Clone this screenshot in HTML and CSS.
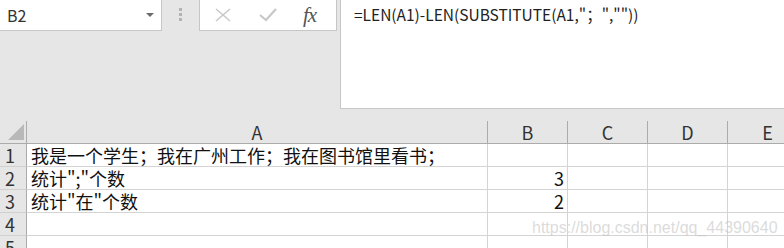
FILE: index.html
```html
<!DOCTYPE html>
<html lang="zh-CN">
<head>
	<meta charset="UTF-8">
	<title>Excel</title>
	<link rel="stylesheet" href="styles.css">
</head>
<body>
	<!-- 编辑栏 -->
	<div class="bar">
		<div class="namebox">
			<span class="name">B2</span>
			<span class="arrow"></span>
		</div>
		<div class="grip">
			<i></i><i></i><i></i>
		</div>
		<div class="fxbox">
			<svg class="ico" width="18" height="16" viewBox="0 0 18 16">
				<path d="M2 2 L16 14 M16 2 L2 14" stroke="#c8c8c8" stroke-width="1.5" fill="none"/>
			</svg>
			<svg class="ico" width="18" height="16" viewBox="0 0 18 16">
				<path d="M1 8 L7 13 L17 2" stroke="#c8c8c8" stroke-width="2.2" fill="none"/>
			</svg>
			<span class="fx">fx</span>
		</div>
		<div class="formula">=LEN(A1)-LEN(SUBSTITUTE(A1,"；","")) </div>
	</div>

	<!-- 表格 -->
	<div class="sheet">
		<div class="grid">
			<div class="hd corner">
				<svg width="16" height="16" viewBox="0 0 16 16"><polygon points="16,0 16,16 0,16" fill="#b8b8b8"/></svg>
			</div>
			<div class="hd col">A</div>
			<div class="hd col">B</div>
			<div class="hd col">C</div>
			<div class="hd col">D</div>
			<div class="hd col">E</div>

			<div class="hd row">1</div>
			<div class="c">我是一个学生；我在广州工作；我在图书馆里看书；</div>
			<div class="c"></div><div class="c"></div><div class="c"></div><div class="c"></div>

			<div class="hd row">2</div>
			<div class="c">统计";"个数</div>
			<div class="c num">3</div><div class="c"></div><div class="c"></div><div class="c"></div>

			<div class="hd row">3</div>
			<div class="c">统计"在"个数</div>
			<div class="c num">2</div><div class="c"></div><div class="c"></div><div class="c"></div>

			<div class="hd row">4</div>
			<div class="c"></div><div class="c"></div><div class="c"></div><div class="c"></div><div class="c"></div>

			<div class="hd row">5</div>
			<div class="c"></div><div class="c"></div><div class="c"></div><div class="c"></div><div class="c"></div>
		</div>
		<div class="mark">https://blog.csdn.net/qq_44390640</div>
	</div>
</body>
</html>
```

FILE: styles.css
```css
/* 初始化 */
body{margin:0;padding:0;width:784px;height:248px;overflow:hidden;background:#fff;font-family:"Noto Sans CJK SC","Liberation Sans",sans-serif;color:#111;}

/* 编辑栏 */
.bar{
	display: flex;
	align-items: flex-start;
	height: 121px;
	background: #e6e6e6;
}

.namebox{
	box-sizing: border-box;
	display: flex;
	align-items: center;
	width: 162px;
	height: 31px;
	padding-left: 7px;
	background: #fff;
	border-right: 1px solid #c6c6c6;
	border-bottom: 1px solid #c6c6c6;
	font-size: 16px;
	color: #333;
}

.namebox .arrow{
	margin-left: auto;
	margin-right: 7px;
	width: 0;
	height: 0;
	border-left: 4px solid transparent;
	border-right: 4px solid transparent;
	border-top: 4px solid #6b6b6b;
}

.grip{
	display: flex;
	flex-direction: column;
	align-items: center;
	gap: 2px;
	width: 37px;
	padding-top: 8px;
}

.grip i{
	display: block;
	width: 3px;
	height: 3px;
	background: #b3b3b3;
}

.fxbox{
	box-sizing: border-box;
	display: flex;
	align-items: center;
	width: 138px;
	height: 31px;
	padding-left: 14px;
	background: #fff;
	border-left: 1px solid #c6c6c6;
	border-right: 1px solid #c6c6c6;
	border-bottom: 1px solid #c6c6c6;
}

.fxbox .ico{
	margin-right: 27px;
}

.fxbox .fx{
	margin-left: -1px;
	font-family: "Liberation Serif", serif;
	font-style: italic;
	font-size: 21px;
	color: #555;
	letter-spacing: -1px;
}

.formula{
	box-sizing: border-box;
	flex: 1;
	height: 109px;
	margin-left: 3px;
	padding: 3px 0 0 13px;
	background: #fff;
	border-left: 1px solid #c6c6c6;
	border-bottom: 1px solid #c6c6c6;
	font-size: 15.5px;
	color: #222;
	white-space: pre;
}

/* 表格 */
.sheet{
	position: relative;
}

.grid{
	display: grid;
	grid-template-columns: 27px 461px repeat(4, 80px);
	grid-template-rows: 23px;
	grid-auto-rows: 23px;
	font-size: 18px;
	line-height: 22px;
}

.grid > div{
	box-sizing: border-box;
	border-right: 1px solid #d4d4d4;
	border-bottom: 1px solid #d4d4d4;
	white-space: nowrap;
}

.grid .hd{
	background: #e6e6e6;
	color: #333;
}

.grid .col{
	text-align: center;
	border-right-color: #ababab;
	border-bottom-color: #ababab;
}

.grid .corner{
	display: flex;
	align-items: flex-end;
	padding: 0 0 3px 8px;
	border-right-color: #ababab;
	border-bottom-color: #ababab;
}

.grid .row{
	padding-left: 5px;
	border-right-color: #ababab;
	border-bottom-color: #d0d0d0;
}

.grid .c{
	padding-left: 4px;
}

.grid .num{
	text-align: right;
	padding-right: 3px;
}

.mark{
	position: absolute;
	left: 532px;
	top: 98px;
	font-family: "Liberation Sans", sans-serif;
	font-size: 16px;
	color: rgba(195,195,195,.6);
}
```
